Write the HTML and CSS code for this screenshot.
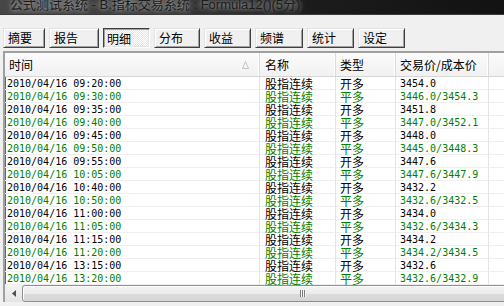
FILE: index.html
```html
<!DOCTYPE html>
<html lang="zh-CN">
<head>
<meta charset="utf-8">
<title>公式测试系统</title>
<link rel="stylesheet" href="styles.css">
</head>
<body>
<div class="titlebar"><span class="title">公式测试系统 - B.指标交易系统 : Formula12()(5分)</span></div>
<div class="tabs">
  <div class="tab w42">摘要</div>
  <div class="tab w50">报告</div>
  <div class="tab w47 pressed">明细</div>
  <div class="tab w46">分布</div>
  <div class="tab w47">收益</div>
  <div class="tab w48">频谱</div>
  <div class="tab w47">统计</div>
  <div class="tab w47">设定</div>
</div>
<div class="grid">
  <div class="row head">
    <div class="c c1">时间<svg class="sort" width="7" height="8" viewBox="0 0 7 8"><path d="M3.5 0.5 L6.5 7.5 L0.5 7.5 Z" fill="none" stroke="#c4c4c4" stroke-width="1"/></svg></div>
    <div class="c c2">名称</div>
    <div class="c c3">类型</div>
    <div class="c c4">交易价/成本价</div>
    <div class="c c5"></div>
  </div>
  <div class="row"><div class="c c1 num">2010/04/16 09:20:00</div><div class="c c2">股指连续</div><div class="c c3">开多</div><div class="c c4 num">3454.0</div><div class="c c5"></div></div>
  <div class="row g"><div class="c c1 num">2010/04/16 09:30:00</div><div class="c c2">股指连续</div><div class="c c3">平多</div><div class="c c4 num">3446.0/3454.3</div><div class="c c5"></div></div>
  <div class="row"><div class="c c1 num">2010/04/16 09:35:00</div><div class="c c2">股指连续</div><div class="c c3">开多</div><div class="c c4 num">3451.8</div><div class="c c5"></div></div>
  <div class="row g"><div class="c c1 num">2010/04/16 09:40:00</div><div class="c c2">股指连续</div><div class="c c3">平多</div><div class="c c4 num">3447.0/3452.1</div><div class="c c5"></div></div>
  <div class="row"><div class="c c1 num">2010/04/16 09:45:00</div><div class="c c2">股指连续</div><div class="c c3">开多</div><div class="c c4 num">3448.0</div><div class="c c5"></div></div>
  <div class="row g"><div class="c c1 num">2010/04/16 09:50:00</div><div class="c c2">股指连续</div><div class="c c3">平多</div><div class="c c4 num">3445.0/3448.3</div><div class="c c5"></div></div>
  <div class="row"><div class="c c1 num">2010/04/16 09:55:00</div><div class="c c2">股指连续</div><div class="c c3">开多</div><div class="c c4 num">3447.6</div><div class="c c5"></div></div>
  <div class="row g"><div class="c c1 num">2010/04/16 10:05:00</div><div class="c c2">股指连续</div><div class="c c3">平多</div><div class="c c4 num">3447.6/3447.9</div><div class="c c5"></div></div>
  <div class="row"><div class="c c1 num">2010/04/16 10:40:00</div><div class="c c2">股指连续</div><div class="c c3">开多</div><div class="c c4 num">3432.2</div><div class="c c5"></div></div>
  <div class="row g"><div class="c c1 num">2010/04/16 10:50:00</div><div class="c c2">股指连续</div><div class="c c3">平多</div><div class="c c4 num">3432.6/3432.5</div><div class="c c5"></div></div>
  <div class="row"><div class="c c1 num">2010/04/16 11:00:00</div><div class="c c2">股指连续</div><div class="c c3">开多</div><div class="c c4 num">3434.0</div><div class="c c5"></div></div>
  <div class="row g"><div class="c c1 num">2010/04/16 11:05:00</div><div class="c c2">股指连续</div><div class="c c3">平多</div><div class="c c4 num">3432.6/3434.3</div><div class="c c5"></div></div>
  <div class="row"><div class="c c1 num">2010/04/16 11:15:00</div><div class="c c2">股指连续</div><div class="c c3">开多</div><div class="c c4 num">3434.2</div><div class="c c5"></div></div>
  <div class="row g"><div class="c c1 num">2010/04/16 11:20:00</div><div class="c c2">股指连续</div><div class="c c3">平多</div><div class="c c4 num">3434.2/3434.5</div><div class="c c5"></div></div>
  <div class="row"><div class="c c1 num">2010/04/16 13:15:00</div><div class="c c2">股指连续</div><div class="c c3">开多</div><div class="c c4 num">3432.6</div><div class="c c5"></div></div>
  <div class="row g"><div class="c c1 num">2010/04/16 13:20:00</div><div class="c c2">股指连续</div><div class="c c3">平多</div><div class="c c4 num">3432.6/3432.9</div><div class="c c5"></div></div>
  <div class="hscroll">
    <div class="arrow"><svg width="4" height="7" viewBox="0 0 4 7"><path d="M4 0 L0 3.5 L4 7 Z" fill="#505050"/></svg></div>
    <div class="thumb"><span class="grip"></span></div>
  </div>
</div>
</body>
</html>
```
FILE: styles.css
```css
html, body {
  margin: 0;
  width: 504px;
  height: 306px;
  overflow: hidden;
  background: #f0f0f0;
}

.titlebar {
  height: 14px;
  overflow: hidden;
  background: linear-gradient(to right, #474747 0%, #363636 35%, #1c1c1c 60%, #121212 100%);
  border-bottom: 1px solid #3c3c3c;
}

.title {
  display: block;
  margin-top: -4px;
  padding-left: 10px;
  font: 13px/17px "Liberation Sans", "Noto Sans CJK SC", sans-serif;
  color: #1c1c1c;
  white-space: nowrap;
  text-shadow: 0 0 4px rgba(255,255,255,.6), 0 0 9px rgba(255,255,255,.45);
}

.tabs {
  display: flex;
  gap: 4px;
  padding: 13px 0 0 3px;
}

.tab {
  box-sizing: border-box;
  height: 20px;
  padding-left: 4px;
  font: 12px/18px "Noto Sans CJK SC", sans-serif;
  color: #000;
  background: #f0f0f0;
  border: 1px solid;
  border-color: #e3e3e3 #404040 #404040 #e3e3e3;
  box-shadow: inset 1px 1px #fff, inset -1px -1px #a0a0a0;
}

.tab.pressed {
  border-color: #404040 #fff #fff #404040;
  box-shadow: inset 1px 1px #a0a0a0, inset -1px -1px #e3e3e3;
  background: repeating-conic-gradient(#fff 0 25%, #e6e6e6 0 50%) 0 0 / 2px 2px;
  padding-left: 3px;
  padding-top: 1px;
  line-height: 17px;
}

.w42 { width: 42px; }
.w46 { width: 46px; }
.w47 { width: 47px; }
.w48 { width: 48px; }
.w50 { width: 50px; }

.grid {
  margin: 3px 0 0 3px;
  width: 540px;
  border-top: 2px solid #a0a0a0;
  border-left: 2px solid #a0a0a0;
  box-shadow: inset 1px 1px #696969;
  background: #fff;
}

.row {
  display: grid;
  grid-template-columns: 255px 76px 60px 93px 1fr;
  height: 13px;
  color: #000;
}

.row.g { color: #008000; }

.c {
  box-sizing: border-box;
  height: 13px;
  border-right: 1px solid #e4e4e4;
  border-bottom: 1px solid #efefef;
  font: 12px/13px "Noto Sans CJK SC", sans-serif;
  white-space: nowrap;
}

.c.num {
  font: 10px/14px "DejaVu Sans Mono", "Liberation Mono", monospace;
}

.c1 { padding-left: 2px; }
.c2 { padding-left: 5px; }
.c3 { padding-left: 4px; }
.c4 { padding-left: 4px; }
.c5 { border-right: 0; }

.row.head {
  height: 24px;
  background: linear-gradient(#fbfbfb, #f1f1f1);
}

.row.head .c {
  height: 24px;
  line-height: 24px;
  border-bottom: 1px solid #d5d5d5;
  border-right: 1px solid #dadada;
  box-shadow: inset -1px 0 #fff;
  color: #000;
}

.row.head .c1 {
  padding-left: 4px;
  display: flex;
  align-items: center;
  justify-content: space-between;
  padding-right: 10px;
}

.row.head .c5 { border-right: 0; box-shadow: none; }

.sort { display: block; }

.hscroll {
  display: flex;
  height: 17px;
  background: #e8e8e8;
}

.arrow {
  width: 17px;
  display: flex;
  align-items: center;
  justify-content: center;
  background: linear-gradient(#f4f4f4, #e4e4e4);
}

.thumb {
  flex: 1;
  box-sizing: border-box;
  border: 1px solid #8e8f8f;
  border-radius: 3px;
  background: linear-gradient(#f3f3f3 0%, #ececec 50%, #dcdcdc 51%, #d5d5d5 100%);
  box-shadow: inset 1px 1px #fff;
  display: flex;
  align-items: center;
  padding-left: 277px;
}

.grip {
  width: 6px;
  height: 7px;
  background: repeating-linear-gradient(to right, #7c7c7c 0 1px, #f6f6f6 1px 2px);
}
```
